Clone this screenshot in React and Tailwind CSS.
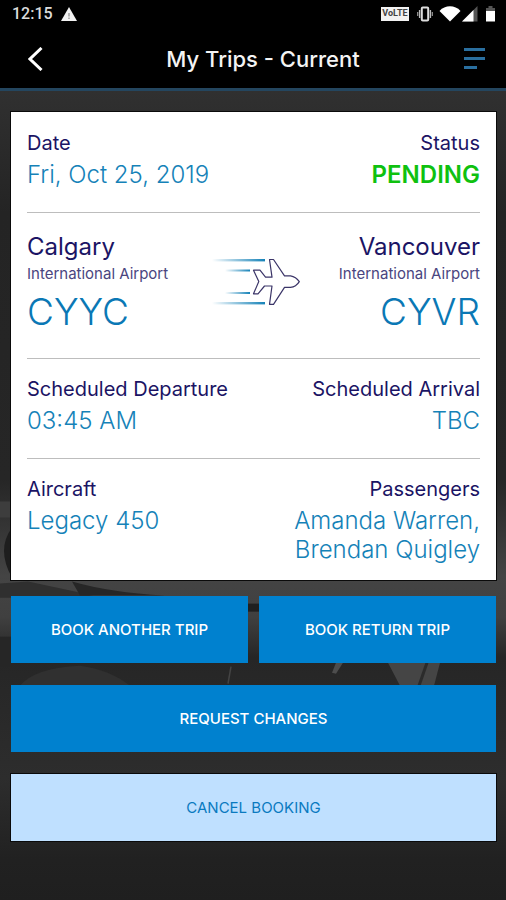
const NAVY = "text-[#1b1464]";

function StatusBar() {
  return (
    <div className="flex h-7 items-center justify-between pr-[11px] pl-3 text-white">
      <div className="flex items-center gap-2">
        <span className="font-[Roboto,sans-serif] text-[16px] leading-7 font-medium text-[#dcdcdc]">12:15</span>
        <svg className="h-4 w-4" viewBox="0 0 16 16" aria-hidden="true">
          <path d="M8 1 16 15H0Z" fill="#f2f2f2" />
          <path d="M8 7v3.5M8 11.5v1.5" stroke="#999" strokeWidth="1.4" />
        </svg>
      </div>
      <div className="flex items-center">
        <span className="flex h-[14px] w-7 items-center justify-center bg-[#f2f2f2] font-[Roboto,sans-serif] text-[9px] font-bold text-[#444]">VoLTE</span>
        <svg className="ml-2 h-4 w-4" viewBox="0 0 16 16" fill="none" aria-hidden="true">
          <rect x="4.8" y="1.5" width="6.4" height="13" rx="1" stroke="#ddd" strokeWidth="2" />
          <path d="M2.600 4v8M13.400 4v8" stroke="#bbb" strokeWidth="1.4" />
          <path d="M.7 6v4M15.300 6v4" stroke="#999" strokeWidth="1.2" />
        </svg>
        <svg className="ml-1.5 h-4 w-[22px]" viewBox="0 0 22 16" aria-hidden="true">
          <path d="M.5 5C6-1.2 16-1.2 21.500 5L11 15.500Z" fill="#fff" />
        </svg>
        <svg className="ml-px h-4 w-4" viewBox="0 0 16 16" aria-hidden="true">
          <path d="M15.500 0V15.500H0Z" fill="#555" />
          <path d="M11.500 4V15.500H0Z" fill="#fff" />
        </svg>
        <svg className="ml-2 h-4 w-[9px]" viewBox="0 0 9 16" aria-hidden="true">
          <path d="M2.500 0h4v2H9v3H0V2h2.500Z" fill="#555" />
          <path d="M0 5h9v10.500H0Z" fill="#fff" />
        </svg>
      </div>
    </div>
  );
}

function AppBar() {
  return (
    <div className="flex h-[60px] items-center justify-between px-5 pt-0.5">
      <button type="button" aria-label="Back" className="flex h-10 w-[60px] items-center pl-2">
        <svg className="h-6 w-[15px]" viewBox="0 0 15 24" fill="none" aria-hidden="true">
          <path d="M13.500 1 2 12 13.500 23" stroke="#fff" strokeWidth="3" />
        </svg>
      </button>
      <h1 className="text-[22px] leading-7 font-medium text-[#f4f4f4]">My Trips - Current</h1>
      <button type="button" aria-label="Menu" className="flex h-10 w-10 items-center justify-end">
        <svg className="h-[22px] w-[22px]" viewBox="0 0 22 22" aria-hidden="true">
          <path d="M0 0h21v3H0ZM0 9h21v3H0ZM0 18h13v3H0Z" fill="#2a6f9f" />
        </svg>
      </button>
    </div>
  );
}

function PlaneIcon() {
  return (
    <svg className="h-[50px] w-[92px] shrink-0" viewBox="207 258 92 50" fill="none" aria-hidden="true">
      <defs>
        <linearGradient id="trail" x1="0" x2="1">
          <stop offset="0" stopColor="#1582b8" stopOpacity="0" />
          <stop offset="1" stopColor="#1582b8" />
        </linearGradient>
      </defs>
      <g fill="url(#trail)">
        <rect x="211" y="259" width="53" height="2.400" />
        <rect x="224" y="269.500" width="25" height="2" />
        <rect x="224" y="292" width="25" height="2" />
        <rect x="211" y="302" width="53" height="2.400" />
      </g>
      <path
        d="M268.500 259.500H272.500L283.500 275.800H289.500C293.500 276.500 296.500 279 298.300 281.600C296.500 284.500 293.500 287 289.500 287.400H283.500L272.500 304.300H268.500L271 286H263.500L257 293.800H252.500L257.800 281.600L252.500 270.200H259L264.500 277.200H271Z"
        stroke="#3b3568"
        strokeWidth="1.200"
        strokeLinejoin="round"
      />
    </svg>
  );
}

function Field({ label, end, children }) {
  return (
    <div className={end ? "text-right" : ""}>
      <dt className={`text-[20px] leading-7 ${NAVY}`}>{label}</dt>
      <dd className="mt-[3px] text-[24px] leading-[29px] font-light text-[#1582b8]">{children}</dd>
    </div>
  );
}

function Airport({ city, code, end }) {
  return (
    <div className={end ? "text-right" : ""}>
      <p className={`text-[24px] leading-[30px] ${NAVY}`}>{city}</p>
      <p className="mt-0.5 text-[15px] leading-5 text-[#4a4580]">International Airport</p>
      <p className="mt-1.5 text-[37px] leading-[44px] font-light text-[#0a78b5]">{code}</p>
    </div>
  );
}

function Action({ tone, children }) {
  return (
    <button
      type="button"
      className={`h-[67px] w-full text-[15px] leading-5 ${
        tone === "light"
          ? "bg-[#bfe0ff] text-[#0a7abf] shadow-[0_0_0_1px_#0a0a0a]"
          : "bg-[#0081cf] font-medium text-white"
      }`}
    >
      {children}
    </button>
  );
}

function Backdrop() {
  return (
    <svg className="absolute inset-0 h-full w-full" viewBox="0 0 506 808" preserveAspectRatio="none" aria-hidden="true">
      <defs>
        <linearGradient id="room" x1="0" y1="0" x2="0" y2="1">
          <stop offset="0" stopColor="#303030" />
          <stop offset="0.15" stopColor="#242424" />
          <stop offset="0.48" stopColor="#262626" />
          <stop offset="0.6" stopColor="#444444" />
          <stop offset="0.65" stopColor="#404040" />
          <stop offset="0.7" stopColor="#262626" />
          <stop offset="0.85" stopColor="#2d2d2d" />
          <stop offset="0.95" stopColor="#212121" />
          <stop offset="1" stopColor="#1f1f1f" />
        </linearGradient>
      </defs>
      <rect width="506" height="808" fill="url(#room)" />
      <path d="M0 410h12v16H0Z" fill="#3d3d3d" />
      <path d="M12 436Q-4 458 12 486Z" fill="#1e1e1e" />
      <path d="M0 492 28 490 75 500 100 506H0Z" fill="#2f2f2f" />
      <path d="M72 490Q110 501 165 504H80Z" fill="#262626" />
      <path d="M0 545h12v30H0Z" fill="#262626" />
      <path d="M248 512h12v8h-12Z" fill="#202020" />
      <path d="M336 571H343L336 582 332 581Z" fill="#4d4d4d" />
      <path d="M388 571H440L434 594H400Z" fill="#454545" />
      <path d="M427 571 419 594" stroke="#2b2b2b" strokeWidth="3" />
      <path d="M20 594Q35 576 80 574Q110 578 130 594Z" fill="#303030" />
      <path d="M231 575 228 592" stroke="#444" strokeWidth="1.500" />
    </svg>
  );
}

export default function App() {
  return (
    <div className="flex min-h-screen flex-col bg-[#1f1f1f] font-[Inter,'Liberation_Sans',sans-serif]">
      <header className="border-b-[3px] border-[#24465f] bg-black">
        <StatusBar />
        <AppBar />
      </header>
      <main className="relative isolate flex-1 pt-[21px] pr-[10px] pb-8 pl-[11px]">
        <div className="absolute inset-0 -z-10">
          <Backdrop />
        </div>
        <dl className="bg-white px-4 shadow-[0_0_0_1px_#0a0a0a]">
          <div className="flex justify-between pt-[17px] pb-[23px]">
            <Field label="Date">Fri, Oct 25, 2019</Field>
            <Field label="Status" end>
              <span className="font-semibold text-[#0fc10f]">PENDING</span>
            </Field>
          </div>
          <div className="flex items-center justify-between border-t border-[#bdbdbd] pt-[19px] pb-6">
            <Airport city="Calgary" code="CYYC" />
            <PlaneIcon />
            <Airport city="Vancouver" code="CYVR" end />
          </div>
          <div className="flex justify-between border-t border-[#bdbdbd] pt-4 pb-[23px]">
            <Field label="Scheduled Departure">03:45 AM</Field>
            <Field label="Scheduled Arrival" end>TBC</Field>
          </div>
          <div className="flex justify-between border-t border-[#bdbdbd] pt-4 pb-4">
            <Field label="Aircraft">Legacy 450</Field>
            <Field label="Passengers" end>
              Amanda Warren,
              <br />
              Brendan Quigley
            </Field>
          </div>
        </dl>
        <div className="mt-4 grid grid-cols-2 gap-[11px]">
          <Action>BOOK ANOTHER TRIP</Action>
          <Action>BOOK RETURN TRIP</Action>
        </div>
        <div className="mt-[22px] grid gap-[22px]">
          <Action>REQUEST CHANGES</Action>
          <Action tone="light">CANCEL BOOKING</Action>
        </div>
      </main>
    </div>
  );
}
